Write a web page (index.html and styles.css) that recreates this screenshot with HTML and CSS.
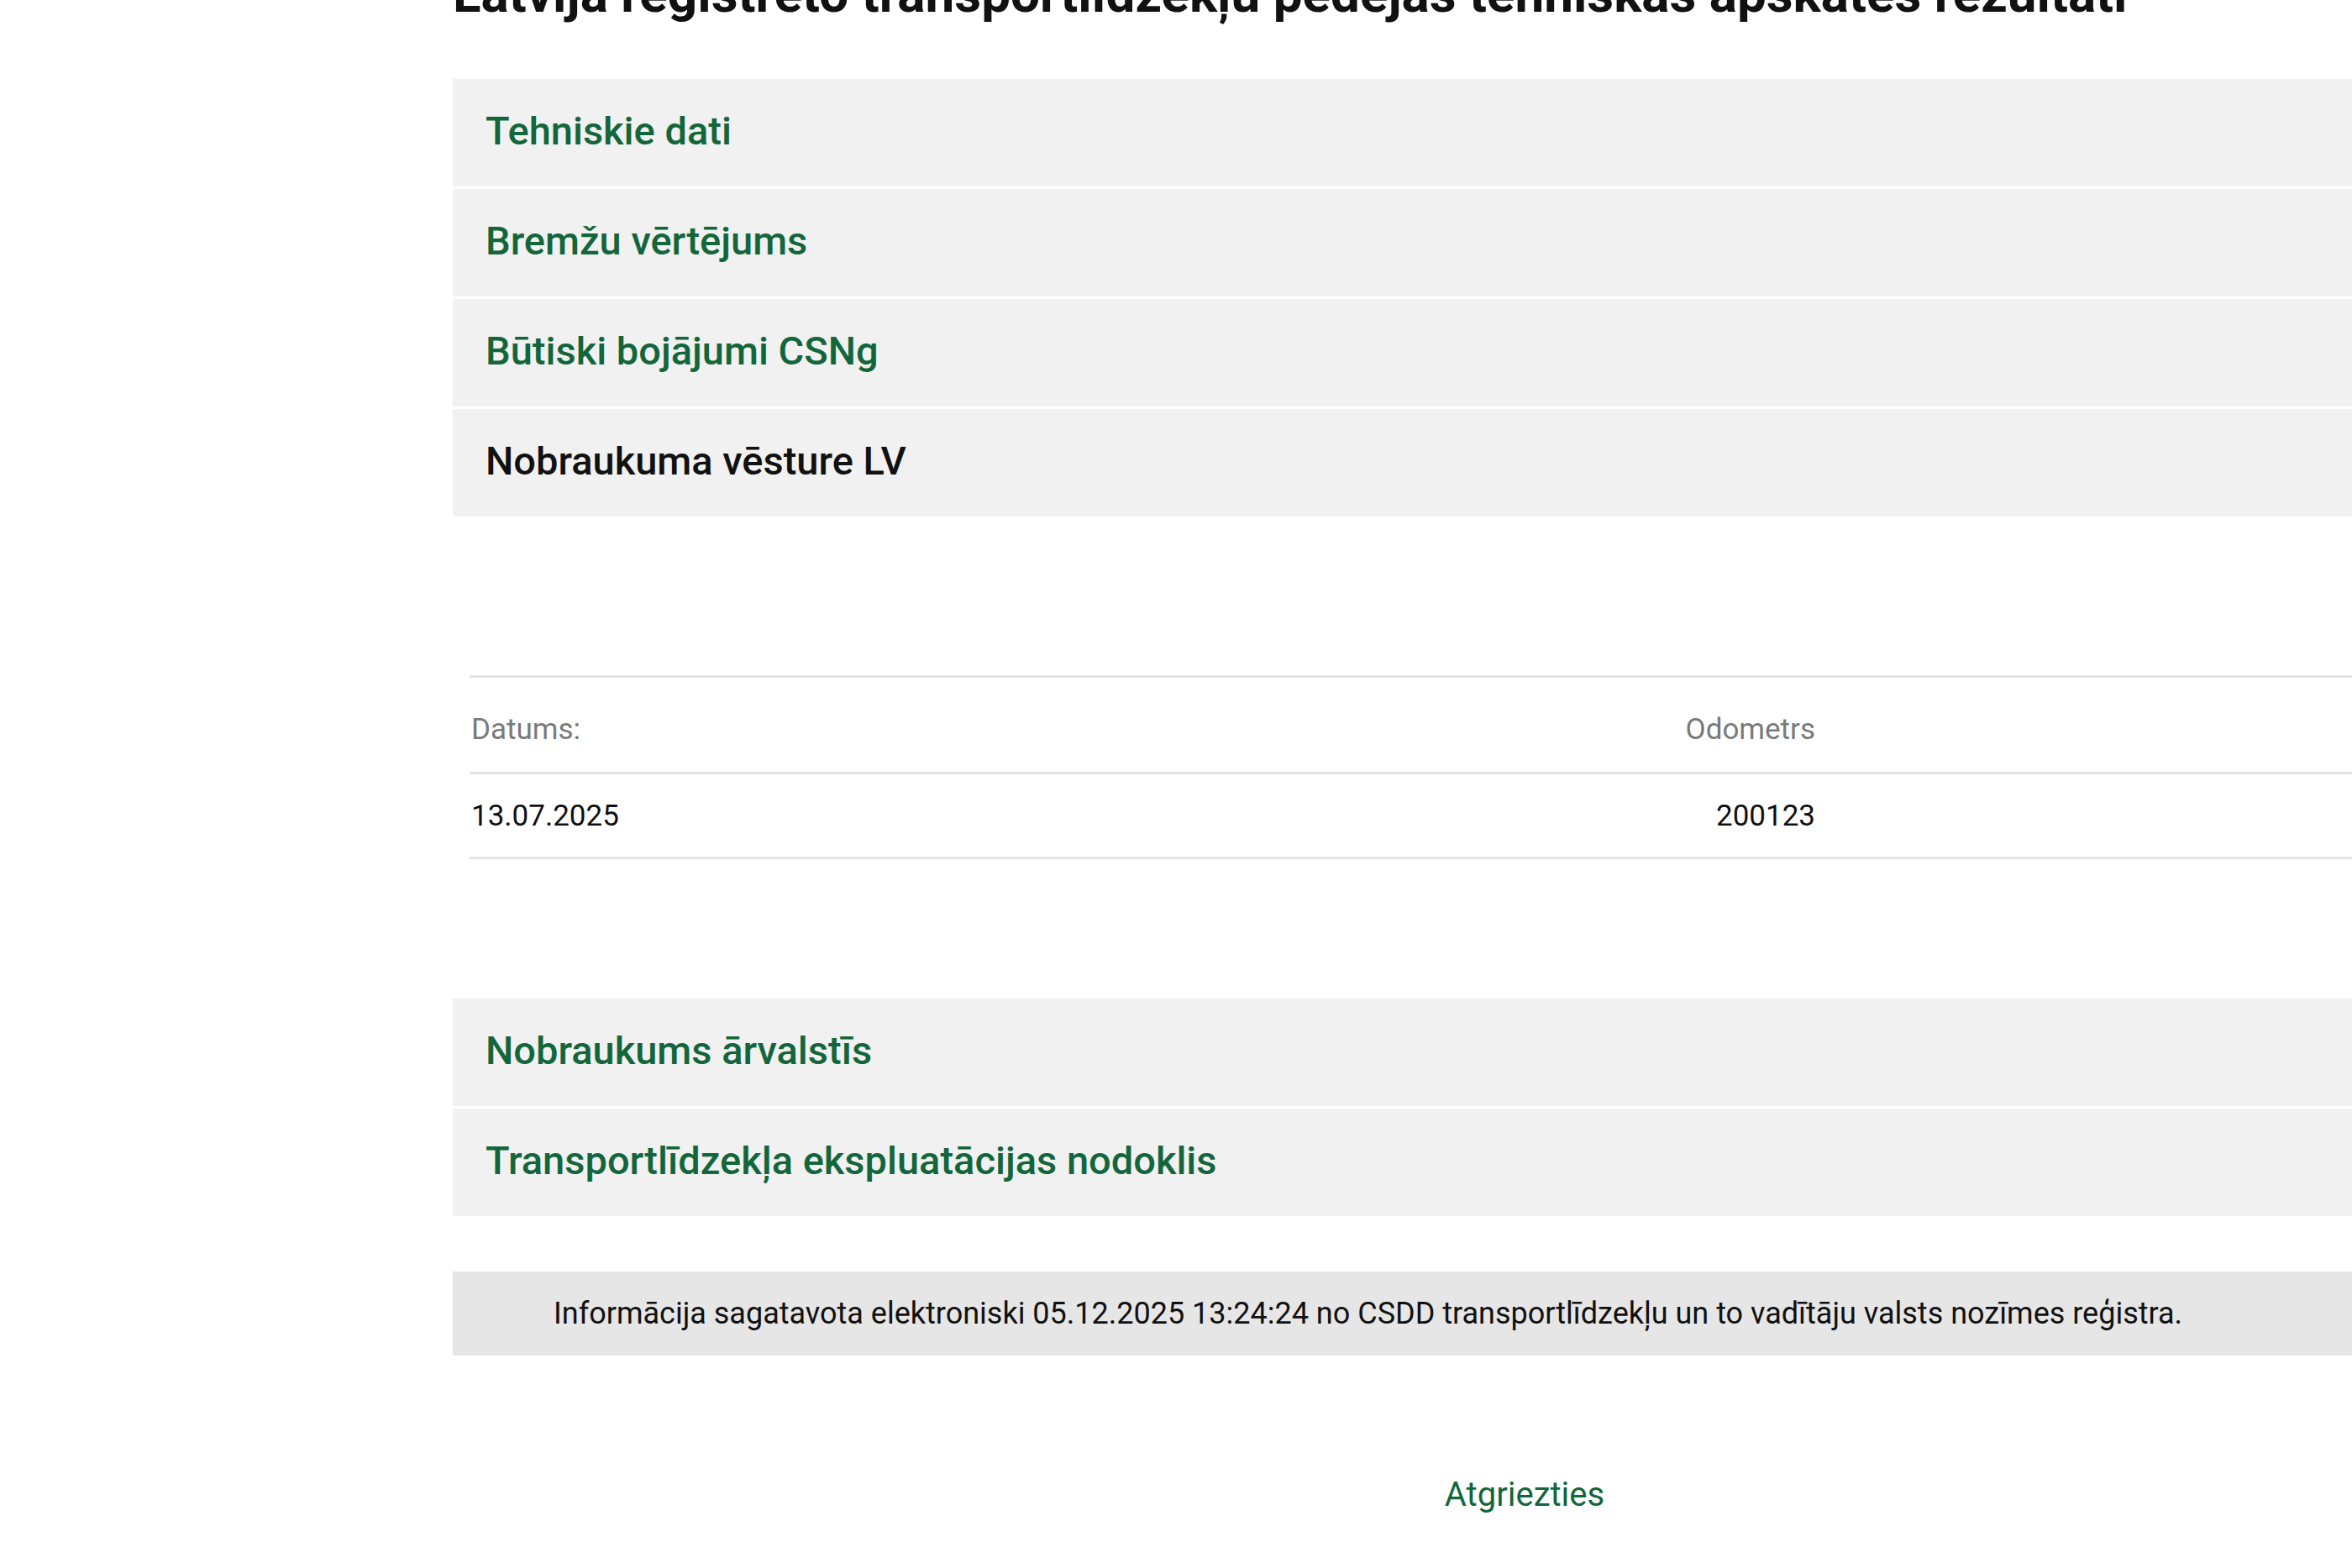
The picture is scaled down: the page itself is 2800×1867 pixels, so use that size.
FILE: index.html
```html
<!DOCTYPE html>
<html lang="lv">
<head>
<meta charset="utf-8">
<title>Transportlīdzekļa tehniskās apskates rezultāti</title>
<link rel="stylesheet" href="styles.css">
</head>
<body>
<main class="page">
  <h1 class="title">Latvijā reģistrēto transportlīdzekļu pēdējās tehniskās apskates rezultāti</h1>

  <section class="accordion">
    <div class="acc-item"><span class="acc-label">Tehniskie dati</span></div>
    <div class="acc-item"><span class="acc-label">Bremžu vērtējums</span></div>
    <div class="acc-item"><span class="acc-label">Būtiski bojājumi CSNg</span></div>
    <div class="acc-item active"><span class="acc-label">Nobraukuma vēsture LV</span></div>
  </section>

  <section class="history">
    <div class="hist-row hist-head">
      <div class="cell cell-date">Datums:</div>
      <div class="cell cell-odo">Odometrs</div>
    </div>
    <div class="hist-row">
      <div class="cell cell-date">13.07.2025</div>
      <div class="cell cell-odo">200123</div>
    </div>
  </section>

  <section class="accordion">
    <div class="acc-item"><span class="acc-label">Nobraukums ārvalstīs</span></div>
    <div class="acc-item"><span class="acc-label">Transportlīdzekļa ekspluatācijas nodoklis</span></div>
  </section>

  <div class="info">Informācija sagatavota elektroniski 05.12.2025 13:24:24 no CSDD transportlīdzekļu un to vadītāju valsts nozīmes reģistra.</div>

  <div class="back-wrap"><a class="back" href="#">Atgriezties</a></div>
</main>
</body>
</html>
```

FILE: styles.css
```css
html, body {
  margin: 0;
  padding: 0;
  background: #ffffff;
  overflow: hidden;
}

body {
  font-family: Roboto, "Liberation Sans", Arial, sans-serif;
  color: #111111;
}

.page {
  width: 2552px;
  margin-left: 539px;
}

.title {
  margin: -44px 0 64px 0;
  font-size: 62px;
  line-height: 74px;
  font-weight: 700;
  color: #111111;
  white-space: nowrap;
}

.accordion {
  display: flex;
  flex-direction: column;
  gap: 3px;
}

.acc-item {
  box-sizing: border-box;
  height: 128px;
  background: #f1f1f1;
  display: flex;
  align-items: center;
  padding-left: 39px;
  padding-bottom: 5px;
}

.acc-label {
  font-size: 47px;
  font-weight: 500;
  color: #13663a;
}

.acc-item.active .acc-label {
  color: #111111;
}

.history {
  margin: 189px 0 166px 20px;
  border-top: 3px solid #e4e4e4;
}

.hist-row {
  display: flex;
  align-items: center;
  height: 98px;
  border-bottom: 3px solid #e4e4e4;
  font-size: 35px;
}

.hist-head {
  box-sizing: border-box;
  height: 115px;
  padding-top: 10px;
  color: #7a7a7a;
}

.cell-date {
  flex: 0 0 1400px;
  padding-left: 2px;
}

.cell-odo {
  flex: 0 0 200px;
  text-align: right;
}

.info {
  margin-top: 66px;
  height: 100px;
  background: #e6e6e6;
  display: flex;
  align-items: center;
  padding-left: 120px;
  font-size: 36px;
  color: #111111;
  white-space: nowrap;
}

.back-wrap {
  display: flex;
  justify-content: center;
  padding-top: 142px;
}

.back {
  font-size: 40px;
  color: #13663a;
  text-decoration: none;
}
```
